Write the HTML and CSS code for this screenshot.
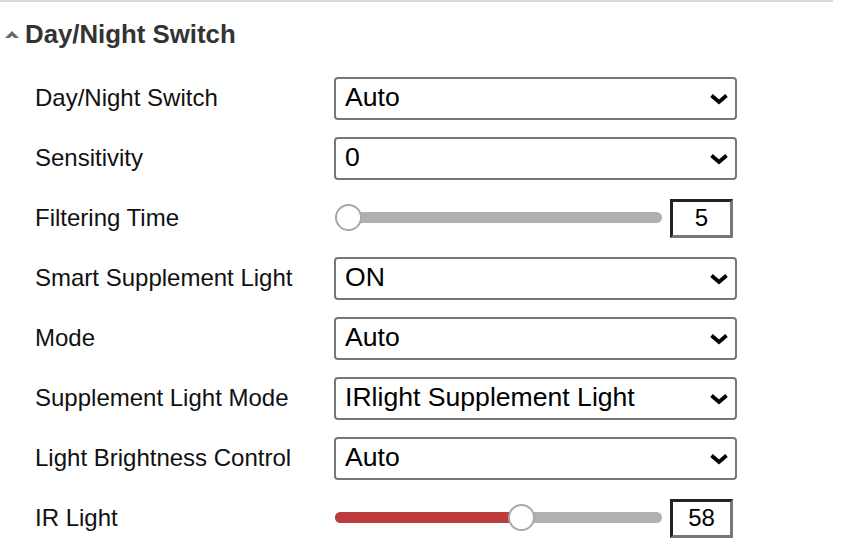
FILE: index.html
```html
<!DOCTYPE html>
<html>
<head>
<meta charset="utf-8">
<link rel="stylesheet" href="styles.css">
</head>
<body>
<div class="panel">
  <div class="topline"></div>
  <div class="heading">
    <svg class="caret" width="16" height="10" viewBox="0 0 16 10"><path d="M1 9 L8 2 L15 9 L10.5 9 L8 6.8 L5.5 9 Z" fill="#6a6a6a"/></svg>
    <span>Day/Night Switch</span>
  </div>
  <div class="rows">
    <div class="row">
      <div class="label">Day/Night Switch</div>
      <div class="select"><span>Auto</span><svg class="chev" width="20" height="12" viewBox="0 0 20 12"><path d="M2.5 2.5 L10 9 L17.5 2.5" fill="none" stroke="#000" stroke-width="3.8"/></svg></div>
    </div>
    <div class="row">
      <div class="label">Sensitivity</div>
      <div class="select"><span>0</span><svg class="chev" width="20" height="12" viewBox="0 0 20 12"><path d="M2.5 2.5 L10 9 L17.5 2.5" fill="none" stroke="#000" stroke-width="3.8"/></svg></div>
    </div>
    <div class="row">
      <div class="label">Filtering Time</div>
      <div class="slider-wrap">
        <div class="slider">
          <div class="track"></div>
          <div class="thumb" style="left:0px"></div>
        </div>
        <div class="num">5</div>
      </div>
    </div>
    <div class="row">
      <div class="label">Smart Supplement Light</div>
      <div class="select"><span>ON</span><svg class="chev" width="20" height="12" viewBox="0 0 20 12"><path d="M2.5 2.5 L10 9 L17.5 2.5" fill="none" stroke="#000" stroke-width="3.8"/></svg></div>
    </div>
    <div class="row">
      <div class="label">Mode</div>
      <div class="select"><span>Auto</span><svg class="chev" width="20" height="12" viewBox="0 0 20 12"><path d="M2.5 2.5 L10 9 L17.5 2.5" fill="none" stroke="#000" stroke-width="3.8"/></svg></div>
    </div>
    <div class="row">
      <div class="label">Supplement Light Mode</div>
      <div class="select"><span>IRlight Supplement Light</span><svg class="chev" width="20" height="12" viewBox="0 0 20 12"><path d="M2.5 2.5 L10 9 L17.5 2.5" fill="none" stroke="#000" stroke-width="3.8"/></svg></div>
    </div>
    <div class="row">
      <div class="label">Light Brightness Control</div>
      <div class="select"><span>Auto</span><svg class="chev" width="20" height="12" viewBox="0 0 20 12"><path d="M2.5 2.5 L10 9 L17.5 2.5" fill="none" stroke="#000" stroke-width="3.8"/></svg></div>
    </div>
    <div class="row">
      <div class="label">IR Light</div>
      <div class="slider-wrap">
        <div class="slider">
          <div class="track"></div>
          <div class="fill" style="width:174px"></div>
          <div class="thumb" style="left:173px"></div>
        </div>
        <div class="num">58</div>
      </div>
    </div>
  </div>
</div>
</body>
</html>
```
FILE: styles.css
```css
* { box-sizing: border-box; }
html, body { margin: 0; padding: 0; background: #fff; }
body { font-family: "Liberation Sans", Arial, sans-serif; color: #111; }
.panel { width: 842px; }
.topline { width: 833px; height: 2px; background: #d9d9d9; }
.heading {
  height: 66px;
  display: flex;
  align-items: center;
  padding-left: 4px;
  font-size: 25.8px;
  font-weight: bold;
  color: #333;
}
.heading .caret { margin-right: 5px; margin-top: -3px; }
.heading span { position: relative; top: -1px; }
.rows { display: flex; flex-direction: column; }
.row {
  height: 60px;
  display: flex;
  align-items: center;
  padding-left: 35px;
}
.label { width: 299px; font-size: 24px; color: #111; }
.select {
  width: 403px;
  height: 43px;
  border: 2px solid #777;
  border-radius: 4px;
  display: flex;
  align-items: center;
  justify-content: space-between;
  padding: 0 6px 0 9px;
  font-size: 26.6px;
  color: #000;
}
.select span { position: relative; top: -1px; }
.select .chev { margin-top: 2px; }
.slider-wrap { display: flex; align-items: center; gap: 8px; padding-left: 1px; }
.slider { position: relative; width: 327px; height: 28px; }
.track {
  position: absolute; left: 0; right: 0; top: 8px; height: 11px;
  background: #b0b0b0; border-radius: 6px;
}
.fill {
  position: absolute; left: 0; top: 8px; height: 11px;
  background: #bd3b3b; border-radius: 6px 0 0 6px;
}
.thumb {
  position: absolute; top: 0; width: 27px; height: 27px;
  border-radius: 50%; background: #fff; border: 2px solid #a8a8a8;
}
.num {
  width: 63px; height: 39px;
  border-style: solid;
  border-width: 3px;
  border-color: #222 #777 #777 #222;
  display: flex; align-items: center; justify-content: center;
  font-size: 24px; color: #000;
}
```
